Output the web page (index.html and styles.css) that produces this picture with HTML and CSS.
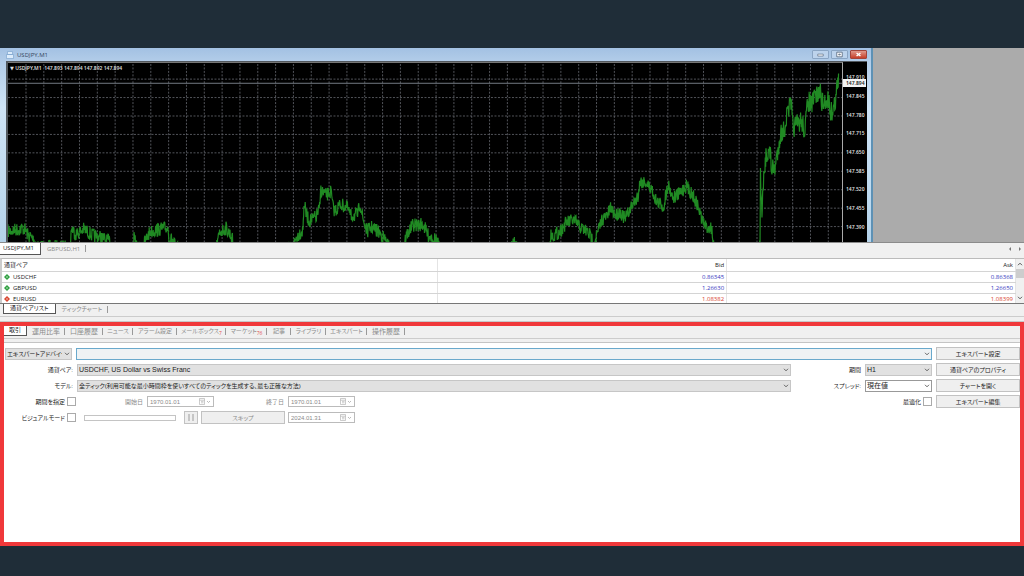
FILE: index.html
```html
<!DOCTYPE html>
<html lang="ja">
<head>
<meta charset="utf-8">
<title>USDJPY,M1</title>
<link rel="stylesheet" href="styles.css">
</head>
<body>
<svg class="defs" width="0" height="0" aria-hidden="true">
  <symbol id="chevron" viewBox="0 0 6 4"><path d="M1 .8 3 2.8 5 .8" fill="none" stroke="currentColor" stroke-width=".8"/></symbol>
  <symbol id="calendar" viewBox="0 0 12 7"><path d="M.5.5h5v6h-5zM.5 2.2h5M2 3.4h2.500M2 4.800h2.500" fill="none" stroke="currentColor" stroke-width=".6"/><path d="m8 3 1.500 1.500L11 3" fill="none" stroke="currentColor" stroke-width=".8"/></symbol>
  <symbol id="tick" viewBox="0 0 6 6"><path d="M3 0 6 3 3 6 0 3z" fill="currentColor"/><path d="M3 2v2M2 3h2" stroke="#fff" stroke-width=".7" opacity=".6"/></symbol>
</svg>
<main class="app">
  <section class="workspace">
    <div class="window">
      <header class="titlebar">
        <svg class="title-icon" viewBox="0 0 8 8"><path d="M1.500.5h5v3h-5zM.5 3.500h7v4h-7z" fill="#dcecfb" stroke="#7fa6cf" stroke-width=".7"/></svg>
        <h1>USDJPY,M1</h1>
        <button class="win-btn" aria-label="最小化"><svg viewBox="0 0 17 9"><path d="M5 4h7v2.500h-7z" fill="#fff" stroke="#4d5f76" stroke-width=".8"/></svg></button>
        <button class="win-btn" aria-label="最大化"><svg viewBox="0 0 17 9"><path d="M5 1.500h7v6h-7zM7.500 4h2v1h-2z" fill="#fff" stroke="#4d5f76" stroke-width="1"/></svg></button>
        <button class="win-btn close" aria-label="閉じる"><svg viewBox="0 0 17 9"><path d="m6 2.500 5 4m0-4-5 4" stroke="#fff" stroke-width="1.800"/></svg></button>
      </header>
      <div class="chart">
        <svg class="plot" viewBox="8 62 834 181" preserveAspectRatio="none">
          <g id="grid" stroke="#676a72" stroke-width=".8" stroke-dasharray="2 1.500"></g>
          <path d="M8 82.500h834" stroke="#747a84" stroke-width="1"/>
          <path id="price" fill="none" stroke="#208a23" stroke-width="1.200"/>
        </svg>
        <p class="ohlc"><span>▼</span> USDJPY,M1&nbsp; 147.893 147.894 147.892 147.894</p>
        <div class="axis">
          <ol><li>147.910</li><li>147.845</li><li>147.780</li><li>147.715</li><li>147.650</li><li>147.585</li><li>147.520</li><li>147.455</li><li>147.390</li></ol>
          <output>147.894</output>
        </div>
      </div>
    </div>
  </section>

  <nav class="tabs chart-tabs">
    <button class="tab on">USDJPY,M1</button>
    <button class="tab">GBPUSD,H1</button>
    <svg class="arrows" viewBox="0 0 14 6"><path d="M3 1v4L1 3zM11 1v4l2-2z" fill="#777"/></svg>
  </nav>

  <section class="market">
    <div class="quotes">
      <table>
        <colgroup><col class="c-pair"><col class="c-bid"><col></colgroup>
        <thead><tr><th>通貨ペア</th><th>Bid</th><th>Ask</th></tr></thead>
        <tbody>
          <tr class="up"><td><svg><use href="#tick"/></svg>USDCHF</td><td>0.86345</td><td>0.86368</td></tr>
          <tr class="up"><td><svg><use href="#tick"/></svg>GBPUSD</td><td>1.26630</td><td>1.26650</td></tr>
          <tr class="down"><td><svg><use href="#tick"/></svg>EURUSD</td><td>1.08382</td><td>1.08399</td></tr>
        </tbody>
      </table>
    </div>
    <div class="scroll">
      <svg class="flip"><use href="#chevron"/></svg><i></i><svg><use href="#chevron"/></svg>
    </div>
  </section>
  <nav class="tabs market-tabs">
    <button class="tab on">通貨ペアリスト</button>
    <button class="tab">ティックチャート</button>
  </nav>
  <div class="splitter"></div>

  <section class="tester">
    <nav class="tabs tester-tabs">
      <button class="tab on">取引</button>
      <button class="tab kanji">運用比率</button>
      <button class="tab kanji">口座履歴</button>
      <button class="tab">ニュース</button>
      <button class="tab">アラーム設定</button>
      <button class="tab">メールボックス<sub>7</sub></button>
      <button class="tab">マーケット<sub>76</sub></button>
      <button class="tab">記事</button>
      <button class="tab">ライブラリ</button>
      <button class="tab">エキスパート</button>
      <button class="tab kanji">操作履歴</button>
    </nav>
    <form class="form">
      <div class="fields">
        <div class="row top">
          <span class="select"><select aria-label="種類"><option>エキスパートアドバイザ</option></select><svg><use href="#chevron"/></svg></span>
          <span class="select focus"><select aria-label="エキスパート"><option></option></select><svg><use href="#chevron"/></svg></span>
        </div>
        <div class="row">
          <label for="pair">通貨ペア:</label>
          <span class="select latin"><select id="pair"><option>USDCHF, US Dollar vs Swiss Franc</option></select><svg><use href="#chevron"/></svg></span>
          <label for="period">期間</label>
          <span class="select latin"><select id="period"><option>H1</option></select><svg><use href="#chevron"/></svg></span>
        </div>
        <div class="row">
          <label for="model">モデル:</label>
          <span class="select"><select id="model"><option>全ティック(利用可能な最小時間枠を使いすべてのティックを生成する、最も正確な方法)</option></select><svg><use href="#chevron"/></svg></span>
          <label for="spread">スプレッド:</label>
          <span class="select white latin"><select id="spread"><option>現在値</option></select><svg><use href="#chevron"/></svg></span>
        </div>
        <div class="row options">
          <label class="check">期間を指定<input type="checkbox"></label>
          <label class="dim" for="from">開始日</label>
          <span class="date"><input id="from" value="1970.01.01" disabled><svg><use href="#calendar"/></svg></span>
          <label class="dim" for="to">終了日</label>
          <span class="date"><input id="to" value="1970.01.01" disabled><svg><use href="#calendar"/></svg></span>
          <label class="check">最適化<input type="checkbox"></label>
        </div>
        <div class="row visual">
          <label class="check">ビジュアルモード<input type="checkbox"></label>
          <div class="track"></div>
          <button type="button" class="btn dim" aria-label="一時停止"><svg viewBox="0 0 6 7"><path d="M1 0v7M5 0v7" stroke="#888" stroke-width=".8"/></svg></button>
          <button type="button" class="btn dim">スキップ</button>
          <span class="date"><input aria-label="スキップ日" value="2024.01.31" disabled><svg><use href="#calendar"/></svg></span>
        </div>
      </div>
      <div class="actions">
        <button type="button" class="btn">エキスパート設定</button>
        <button type="button" class="btn">通貨ペアのプロパティ</button>
        <button type="button" class="btn">チャートを開く</button>
        <button type="button" class="btn">エキスパート編集</button>
      </div>
    </form>
  </section>
</main>
<script src="chart.js"></script>
</body>
</html>
```
FILE: styles.css
```css
* { box-sizing: border-box; }
body {
  margin: 0;
  padding: 48px 0 30px;
  min-height: 100vh;
  background: #1f2d38;
  color: #222;
  font: 6px/10px "Open Sans", "Noto Sans CJK JP", sans-serif;
  font-feature-settings: "palt";
  display: flex;
  flex-direction: column;
}
.defs { position: absolute; }
button, input, select { font: inherit; font-feature-settings: inherit; color: inherit; margin: 0; padding: 0; border-radius: 0; }
h1, p, ol { margin: 0; padding: 0; font: inherit; list-style: none; }
label, .tab, .btn { white-space: nowrap; }
.app { flex: 1; display: flex; flex-direction: column; background: #f0f0f0; }

/* chart window */
.workspace { height: 195px; display: flex; background: #ababab; border-bottom: 1px solid #8b8b8b; }
.window {
  flex: 0 0 85.25%;
  display: flex;
  flex-direction: column;
  padding: 0 4px 0 6px;
  background: linear-gradient(#a3c1e3, #b3cde9 14px, #cfe4f6 60px, #b5d3ea);
  border-right: 2px solid #5d91b5;
}
.titlebar { height: 13px; display: flex; align-items: center; gap: 2px; }
.title-icon { width: 8px; height: 8px; margin-right: 1px; }
.titlebar h1 { flex: 1; color: #34465c; }
.win-btn { width: 17px; height: 9px; border: 1px solid #8aa5c4; background: #bdd3ec; display: flex; border-radius: 1px; }
.win-btn svg { width: 15px; height: 7px; }
.win-btn.close { background: linear-gradient(#e0998c, #c63f2a); border-color: #a3443a; }
.chart { flex: 1; min-height: 0; display: flex; background: #000; border: solid #53595f; border-width: 1px 0 0 2px; position: relative; }
.plot { flex: 1; min-width: 0; height: 100%; border-right: 1px solid #aaa; border-top: 1px solid #777; }
.ohlc, .axis { color: #ddd; font: 600 5px/8px "Noto Sans", "DejaVu Sans", sans-serif; }
.ohlc { position: absolute; left: 2px; top: 2px; }
.axis { flex: 0 0 24px; padding-top: 6px; position: relative; }
.axis ol { height: 168px; display: grid; grid-auto-rows: 1fr; align-items: center; padding-left: 3px; }
.axis output { position: absolute; left: 0; top: 17px; width: 23px; height: 8px; background: #f4f4f4; color: #222; padding-left: 3px; }

/* tabs */
.tabs { display: flex; align-items: flex-start; color: #8b8b8b; }
.tab { height: 10px; padding: 0 6px; line-height: 9px; border: 0; background: none; position: relative; }
.tab:not(.on)::after { content: ""; position: absolute; right: 0; top: 2px; height: 7px; border-right: 1px solid #999; }
.tab.on { color: #222; background: #fff; border: solid #555; border-width: 0 1px 1px 0; }
.tab.kanji { font-size: 7px; }
.tab sub { color: #e05050; font-size: 5px; line-height: 1; vertical-align: -2px; }
.chart-tabs { height: 15px; }
.chart-tabs .tab { height: 12px; }
.chart-tabs .tab.on { padding-left: 3px; }
.arrows { width: 14px; height: 6px; margin: 3px 2px 0 auto; }
.market-tabs { height: 14px; padding-left: 3px; border-top: 1px solid #777; border-bottom: 1px solid #ccc; }
.market-tabs .tab.on { border-left-width: 1px; }
.splitter { height: 5px; border: solid #c8c8c8; border-width: 0 0 1px; }

/* quotes */
.market { height: 45px; display: flex; background: #fff; border-top: 1px solid #bbb; border-left: 2px solid #ccc; }
.quotes { flex: 1; overflow: hidden; }
table { width: 100%; border-collapse: collapse; table-layout: fixed; }
.c-pair { width: 43%; }
.c-bid { width: 28.5%; }
th, td { padding: 0 2px; height: 11px; line-height: 10px; font-weight: normal; text-align: right; border-bottom: 1px solid #d4d4d4; border-right: 1px solid #e4e4e4; }
th { height: 12px; }
th:first-child, td:first-child { text-align: left; color: #222; }
td svg { width: 6px; height: 6px; margin-right: 3px; vertical-align: -1px; }
.up { color: #3538c0; }
.up svg { color: #2fa040; }
.down, .down svg { color: #d8452f; }
.scroll { width: 8px; background: #f0f0f0; display: flex; flex-direction: column; align-items: center; padding: 3px 0; }
.scroll svg { width: 6px; height: 4px; color: #333; }
.scroll i { width: 8px; height: 9px; margin: 3px 0 auto; background: #cdcdcd; }
.flip { transform: rotate(180deg); }

/* tester */
.tester { flex: 1; border: 4px solid #f0383a; display: flex; flex-direction: column; background: #fff; }
.tester-tabs { height: 17px; background: #f0f0f0; border-bottom: 1px solid #c4c4c4; box-shadow: inset 0 -3px #f0f0f0, inset 0 -4px #ccc; display: grid; grid-template-columns: 23px 38px 38px 30px 44px 49px 41px 24px 35px 41px 38px; }
.tester-tabs .tab { padding: 0; }
.form { display: flex; gap: 4px; padding: 4px 0 0 1px; font-family: "Liberation Sans", "Noto Sans CJK JP", sans-serif; }
.fields { flex: 1; min-width: 0; display: grid; grid-auto-rows: 13px; row-gap: 3px; }
.row { display: grid; grid-template-columns: 68px 1fr 66px 67px; column-gap: 4px; align-items: center; }
.row > label { text-align: right; }
.row.top { grid-template-columns: 67px 1fr; }
.row.options { grid-template-columns: 71px 63px 67px 66px 67px 1fr; }
.row.visual { column-gap: 3px; grid-template-columns: 71px 102px 14px 84px 67px; }
.select, .date { display: grid; grid-template-columns: minmax(0, 1fr) auto; align-items: center; height: 12px; }
.select > *, .date > * { grid-row: 1; }
.select select { grid-column: 1 / 3; appearance: none; width: 100%; height: 12px; line-height: 10px; border: 1px solid #c6c6c6; background: #e1e1e1; padding: 0 9px 0 1px; }
.select svg { grid-column: 2; width: 6px; height: 4px; margin-right: 2px; color: #444; pointer-events: none; }
.latin { font-size: 7px; }
.focus select { background: #eef2f4; border-color: #69a9cc; }
.white select { background: #fff; border-color: #999; }
.date input { grid-column: 1 / 3; width: 100%; height: 11px; border: 1px solid #bbb; background: #fff; color: #8a8a8a; padding: 0 2px; }
.date svg { grid-column: 2; width: 12px; height: 7px; margin-right: 3px; color: #aaa; }
.dim { color: #8a8a8a; }
.check { display: flex; justify-content: flex-end; align-items: center; gap: 2px; }
.check input { appearance: none; width: 9px; height: 9px; border: 1px solid #aaa; background: #fff; }
.track { width: 92px; height: 6px; margin-left: 5px; border: 1px solid #c4c4c4; background: #fff; }
.btn { height: 13px; border: 1px solid #c2c2c2; background: #efefef; display: flex; align-items: center; justify-content: center; line-height: 10px; }
.btn svg { width: 6px; height: 7px; }
.actions { width: 84px; display: grid; grid-auto-rows: 13px; row-gap: 3px; }
```
FILE: chart.js
```js
const anchors = [
  8,232, 24,229, 28,236, 34,241, 40,248, 70,248, 71.5,229, 76,235, 84,230, 92,236, 100,238, 110,243,
  120,250, 133,250, 134,240, 138,250, 143,248, 146,240, 150,233, 156,231, 166,229, 168.5,229, 169,240,
  173,241, 176,250, 216,250, 220,233, 226,229, 232,238, 234,250, 292,250, 297,237, 303,231, 304,203,
  306,214, 309,222, 316,218, 320,208, 320.5,190, 326,196, 331,192, 333,208, 335,212, 340,205, 347,208,
  351,217, 358,215, 360,203, 363,220, 367,232, 372,228, 380,234, 386,242, 390,250, 403,250, 406,237,
  413,226, 423,225, 428,236, 437,241, 440,252, 508,252, 514,241, 518,252, 549,252, 551,236, 555,236,
  560,232, 567,223, 574,221, 580,228, 588,233, 594,243, 596,239, 602,220, 606,218, 611,209, 616,216,
  620,212, 625,220, 630,210, 638,196, 640,182, 645,182, 652,190, 657,203, 662,205, 663,210, 665,200,
  668,184, 673,198, 680,194, 686,186, 692,194, 698,207, 703,223, 706,228, 712,229, 714,252, 759,252,
  760,252, 760.5,175, 762,220, 763,190, 765,172, 766,152, 770,153, 772,170, 775,168, 778,150, 780,135,
  784,130, 788,110, 791,104, 793,127, 798,124, 801,120, 805,130, 808,100, 812,105, 815,95, 820,92,
  823,105, 828,97, 831,112, 834,108, 837,87, 839,80
];
let seed = 7;
const random = () => (seed = (seed * 16807) % 2147483647) / 2147483647;
const points = [];
for (let i = 0; i < anchors.length - 2; i += 2) {
  const [x1, y1, x2, y2] = anchors.slice(i, i + 4);
  const steps = Math.max(1, Math.round((x2 - x1) / 0.4));
  for (let s = 0; s < steps; s++) {
    const t = s / steps;
    const swing = x1 > 758 ? 22 : 14;
    const y = y1 + (y2 - y1) * t + (random() - 0.5) * swing;
    points.push((x1 + (x2 - x1) * t).toFixed(1) + " " + y.toFixed(1));
  }
}
document.getElementById("price").setAttribute("d", "M" + points.join("L"));

let lines = "";
for (let i = 0; i < 46; i++) {
  const x = 26 + i * 17.83;
  lines += `<path d="M${x} 63V243"/>`;
}
for (let i = 0; i < 9; i++) {
  lines += `<path d="M8 ${78.3 + i * 18.64}H842"/>`;
}
document.getElementById("grid").innerHTML = lines;
```
